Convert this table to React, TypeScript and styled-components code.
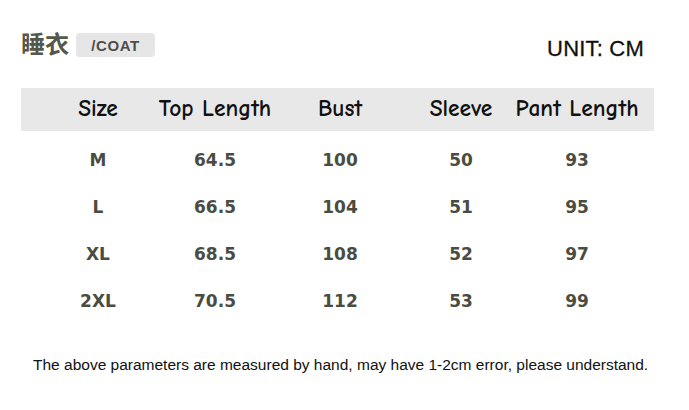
import styled, { createGlobalStyle } from "styled-components";

const GlobalStyle = createGlobalStyle`
	body {
		margin: 0;
		background: #fff;
		font-family: "Liberation Sans", Arial, sans-serif;
	}
`;

const headers = ["Size", "Top Length", "Bust", "Sleeve", "Pant Length"];

const rows = [
	["M", "64.5", "100", "50", "93"],
	["L", "66.5", "104", "51", "95"],
	["XL", "68.5", "108", "52", "97"],
	["2XL", "70.5", "112", "53", "99"]
];

function App() {
	return (
		<Page>
			<GlobalStyle />
			<TopBar>
				<TitleGroup>
					<Title>睡衣</Title>
					<Badge>/COAT</Badge>
				</TitleGroup>
				<Unit>UNIT: CM</Unit>
			</TopBar>

			<HeaderRow>
				{headers.map(h => (
					<HeaderCell key={h}>{h}</HeaderCell>
				))}
			</HeaderRow>

			<Body>
				{rows.map(row => (
					<DataRow key={row[0]}>
						{row.map((cell, i) => (
							<DataCell key={i}>{cell}</DataCell>
						))}
					</DataRow>
				))}
			</Body>

			<Note>
				The above parameters are measured by hand, may have 1-2cm error, please
				understand.
			</Note>
		</Page>
	);
}

const columns = "118px 116px 134px 108px 124px";

const Page = styled.div`
	width: 689px;
	height: 410px;
	box-sizing: border-box;
	padding: 28px 0 0 21px;
`;

const TopBar = styled.div`
	display: flex;
	align-items: center;
	justify-content: space-between;
	width: 623px;
	height: 34px;
`;

const TitleGroup = styled.div`
	display: flex;
	align-items: center;
	gap: 7px;
`;

const Title = styled.div`
	font-family: "Noto Sans CJK SC", sans-serif;
	font-size: 24px;
	font-weight: 700;
	color: #55574a;
	line-height: 1;
	margin-top: -4px;
`;

const Badge = styled.div`
	display: flex;
	align-items: center;
	justify-content: center;
	width: 79px;
	height: 24px;
	background: #e6e6e6;
	border-radius: 4px;
	font-size: 15px;
	font-weight: 700;
	letter-spacing: 0.6px;
	color: #4e4e48;
`;

const Unit = styled.div`
	font-size: 22px;
	letter-spacing: 0.2px;
	color: #111;
	margin-top: 8px;
	-webkit-text-stroke: 0.3px #111;
`;

const HeaderRow = styled.div`
	display: grid;
	grid-template-columns: ${columns};
	align-items: center;
	box-sizing: border-box;
	width: 633px;
	height: 43px;
	margin-top: 26px;
	padding-left: 18px;
	background: #e8e8e8;
`;

const HeaderCell = styled.div`
	text-align: center;
	font-family: "Comic Sans MS", "Comic Neue", "DejaVu Sans Condensed", sans-serif;
	font-size: 23.5px;
	font-weight: 700;
	color: #111;
	white-space: nowrap;
	margin-top: -3px;
`;

const Body = styled.div`
	display: flex;
	flex-direction: column;
	padding-top: 5px;
`;

const DataRow = styled.div`
	display: grid;
	grid-template-columns: ${columns};
	align-items: center;
	height: 47px;
	padding-left: 18px;
`;

const DataCell = styled.div`
	text-align: center;
	font-family: "DejaVu Sans", sans-serif;
	font-size: 17px;
	font-weight: 700;
	color: #4b4c41;
`;

const Note = styled.div`
	margin-top: 32px;
	margin-left: 12px;
	font-size: 15.5px;
	color: #111;
	white-space: nowrap;
`;

export default App;
